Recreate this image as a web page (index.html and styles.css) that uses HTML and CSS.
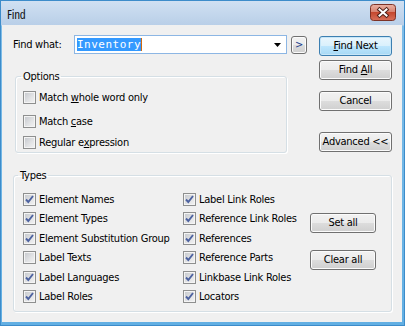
FILE: index.html
```html
<!DOCTYPE html>
<html>
<head>
<meta charset="utf-8">
<link rel="stylesheet" href="styles.css">
</head>
<body>
<div class="window">
  <div class="titlebar">
    <span class="title">Find</span>
    <button class="close" aria-label="Close">
      <svg width="26" height="17" viewBox="0 0 26 17">
        <defs>
          <linearGradient id="cg" x1="0" y1="0" x2="0" y2="1">
            <stop offset="0" stop-color="#eab2a4"/>
            <stop offset="0.45" stop-color="#d88472"/>
            <stop offset="0.5" stop-color="#c5482f"/>
            <stop offset="1" stop-color="#d8705a"/>
          </linearGradient>
        </defs>
        <rect x="0.5" y="0.5" width="25" height="16" rx="3" fill="url(#cg)" stroke="#7d3226"/>
        <path d="M9.5 5.5 L16.5 11.5 M16.5 5.5 L9.5 11.5" stroke="#4e2018" stroke-width="4" stroke-linecap="square"/>
        <path d="M9.5 5.5 L16.5 11.5 M16.5 5.5 L9.5 11.5" stroke="#ffffff" stroke-width="2" stroke-linecap="square"/>
      </svg>
    </button>
  </div>
  <div class="client">
    <div class="top">
      <div class="left">
        <div class="find-row">
          <span class="find-label">Find what:</span>
          <div class="combo">
            <span class="sel">Inventory</span>
            <svg class="caret" width="7" height="4" viewBox="0 0 7 4"><path d="M0 0H7L3.5 4Z" fill="#000"/></svg>
          </div>
          <button class="btn arrow-btn">&gt;</button>
        </div>
        <fieldset class="group options">
          <legend>Options</legend>
          <label class="check"><span class="cb"></span><span class="txt">Match <u>w</u>hole word only</span></label>
          <label class="check r2"><span class="cb"></span><span class="txt">Match <u>c</u>ase</span></label>
          <label class="check r3"><span class="cb"></span><span class="txt">Regular e<u>x</u>pression</span></label>
        </fieldset>
      </div>
      <div class="actions">
        <button class="btn default b1"><u>F</u>ind Next</button>
        <button class="btn b2">Find <u>A</u>ll</button>
        <button class="btn b3">Cancel</button>
        <button class="btn b4">Advanced &lt;&lt;</button>
      </div>
    </div>
    <fieldset class="group types">
      <legend>Types</legend>
      <div class="types-grid">
        <div class="col">
          <label class="check"><span class="cb on"><svg width="11" height="11" viewBox="0 0 11 11"><path d="M2 5.5 L4.3 8 L9 2" class="tick"/></svg></span><span class="txt">Element Names</span></label>
          <label class="check"><span class="cb on"><svg width="11" height="11" viewBox="0 0 11 11"><path d="M2 5.5 L4.3 8 L9 2" class="tick"/></svg></span><span class="txt">Element Types</span></label>
          <label class="check"><span class="cb on"><svg width="11" height="11" viewBox="0 0 11 11"><path d="M2 5.5 L4.3 8 L9 2" class="tick"/></svg></span><span class="txt">Element Substitution Group</span></label>
          <label class="check"><span class="cb"></span><span class="txt">Label Texts</span></label>
          <label class="check"><span class="cb on"><svg width="11" height="11" viewBox="0 0 11 11"><path d="M2 5.5 L4.3 8 L9 2" class="tick"/></svg></span><span class="txt">Label Languages</span></label>
          <label class="check"><span class="cb on"><svg width="11" height="11" viewBox="0 0 11 11"><path d="M2 5.5 L4.3 8 L9 2" class="tick"/></svg></span><span class="txt">Label Roles</span></label>
        </div>
        <div class="col">
          <label class="check"><span class="cb on"><svg width="11" height="11" viewBox="0 0 11 11"><path d="M2 5.5 L4.3 8 L9 2" class="tick"/></svg></span><span class="txt">Label Link Roles</span></label>
          <label class="check"><span class="cb on"><svg width="11" height="11" viewBox="0 0 11 11"><path d="M2 5.5 L4.3 8 L9 2" class="tick"/></svg></span><span class="txt">Reference Link Roles</span></label>
          <label class="check"><span class="cb on"><svg width="11" height="11" viewBox="0 0 11 11"><path d="M2 5.5 L4.3 8 L9 2" class="tick"/></svg></span><span class="txt">References</span></label>
          <label class="check"><span class="cb on"><svg width="11" height="11" viewBox="0 0 11 11"><path d="M2 5.5 L4.3 8 L9 2" class="tick"/></svg></span><span class="txt">Reference Parts</span></label>
          <label class="check"><span class="cb on"><svg width="11" height="11" viewBox="0 0 11 11"><path d="M2 5.5 L4.3 8 L9 2" class="tick"/></svg></span><span class="txt">Linkbase Link Roles</span></label>
          <label class="check"><span class="cb on"><svg width="11" height="11" viewBox="0 0 11 11"><path d="M2 5.5 L4.3 8 L9 2" class="tick"/></svg></span><span class="txt">Locators</span></label>
        </div>
        <div class="side">
          <button class="btn set">Set all</button>
          <button class="btn clear">Clear all</button>
        </div>
      </div>
    </fieldset>
  </div>
</div>
</body>
</html>
```
FILE: styles.css
```css
* { box-sizing: border-box; }
html, body { margin: 0; padding: 0; }
body {
  width: 405px;
  height: 326px;
  overflow: hidden;
  font-family: "DejaVu Sans Condensed", "DejaVu Sans", sans-serif;
  font-stretch: condensed;
  font-size: 11px;
  letter-spacing: -0.25px;
  color: #000;
  background: #fff;
}
.window {
  width: 405px;
  height: 326px;
  display: flex;
  flex-direction: column;
  border: 1px solid #3d8cca;
  background: linear-gradient(#d0e0f2, #b9cfe8 24px, #7fbde8 25px, #62afe3);
}
.titlebar {
  height: 24px;
  flex: none;
  display: flex;
  align-items: flex-start;
  justify-content: space-between;
  padding-left: 6px;
}
.title {
  font-family: "Open Sans", sans-serif;
  font-size: 13px;
  letter-spacing: -0.2px;
  line-height: 22px;
  padding-top: 2px;
  color: #111;
}
.close {
  margin: 3px 8px 0 0;
  padding: 0;
  border: 0;
  background: none;
  width: 26px;
  height: 17px;
  display: block;
}
.close svg { display: block; }
.client {
  flex: 1;
  margin: 0 2px 3px 1px;
  background: #f0f0f0;
  padding: 10px 10px 10px 11px;
  display: flex;
  flex-direction: column;
}
.top {
  display: flex;
  justify-content: space-between;
}
.left { width: 294px; }
.find-row {
  display: flex;
  align-items: center;
  height: 19px;
}
.find-label { width: 61px; line-height: 13px; }
.combo {
  width: 213px;
  height: 19px;
  border: 1px solid #8cb6e4;
  background: #fff;
  display: flex;
  align-items: center;
  padding: 0 5px 0 2px;
}
.sel {
  font-family: "DejaVu Sans Mono", monospace;
  font-stretch: normal;
  font-size: 11px;
  letter-spacing: 0.5px;
  line-height: 13px;
  height: 13px;
  background: #3399ff;
  color: #fff;
  padding-left: 0;
  border-right: 1px solid #d06a10;
}
.caret { margin-left: auto; display: block; }
.btn {
  font: inherit;
  letter-spacing: inherit;
  color: #000;
  padding: 0;
  border: 1px solid #707070;
  border-radius: 3px;
  background: linear-gradient(#f2f2f2, #ebebeb 50%, #dddddd 50%, #cfcfcf);
  box-shadow: inset 0 0 0 1px #fbfbfb;
  height: 20px;
  line-height: 16px;
  text-align: center;
}
.arrow-btn {
  width: 16px;
  height: 18px;
  margin-left: 4px;
  color: #1c3e8c;
  line-height: 15px;
}
.group {
  margin: 0;
  border: 1px solid #d5dfe5;
  border-radius: 3px;
  box-shadow: 1px 1px 0 #fff, inset 1px 1px 0 #fff;
  min-width: 0;
}
.group legend {
  padding: 0 2px;
  line-height: 13px;
}
.options {
  width: 272px;
  margin: 16px 0 0 2px;
  padding: 8px 7px 3px 7px;
}
.options legend { margin-left: -2px; }
.check {
  display: flex;
  align-items: center;
  gap: 3px;
  height: 13px;
  line-height: 13px;
  white-space: nowrap;
}
.txt { display: block; }
.r2 { margin-top: 11px; }
.r3 { margin-top: 8px; }
.cb {
  flex: none;
  width: 13px;
  height: 13px;
  border: 1px solid #8e8f8f;
  background: linear-gradient(135deg, #c3c6cb, #e3e4e6 60%, #f3f3f3);
  box-shadow: inset 0 0 0 1px #f4f4f4;
  display: flex;
  align-items: center;
  justify-content: center;
}
.cb svg { display: block; }
.tick {
  fill: none;
  stroke: #4d62a0;
  stroke-width: 1.9;
}
.actions {
  width: 73px;
  display: flex;
  flex-direction: column;
}
.actions .btn { width: 73px; }
.b1 { margin-top: 1px; }
.b2 { margin-top: 4px; }
.b3 { margin-top: 11px; }
.b4 { margin-top: 21px; }
.default {
  border-color: #3c7fb1;
  background: linear-gradient(#eaf6fd, #d9f0fc 50%, #bee6fd 50%, #a7d9f5);
  box-shadow: inset 0 0 0 1px #c6e6f8;
}
.types {
  margin: 16px 0 0 0;
  padding: 11px 14px 8px 9px;
}
.types legend { margin-left: -5px; }
.types-grid {
  display: grid;
  grid-template-columns: 160px 127px 66px;
}
.col {
  display: grid;
  grid-template-rows: 19px 20px 19px 20px 19px 13px;
}
.side {
  display: flex;
  flex-direction: column;
  padding-top: 20px;
}
.side .btn { width: 66px; }
.clear { margin-top: 17px; }
```
